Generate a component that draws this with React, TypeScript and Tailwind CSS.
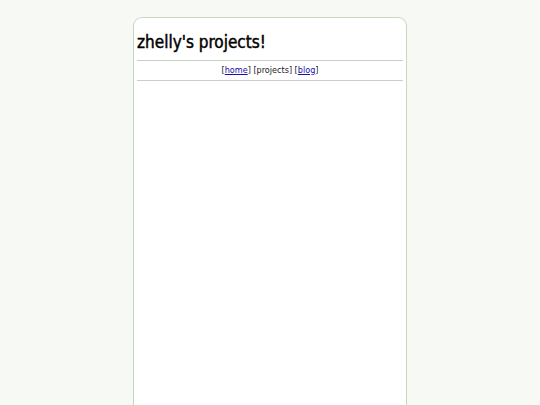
export default function App() {
  return (
    <div className="min-h-[405px] bg-[#f6f9f4] pt-[17px] font-['DejaVu_Sans_Condensed','DejaVu_Sans',Verdana,sans-serif]">
      <div className="mx-auto w-[274px] min-h-[400px] rounded-t-[9px] border border-b-0 border-[#c9d6c1] bg-white px-[3px]">
        <h1 className="mt-[13px] mb-[7px] text-[17px] leading-[22px] font-normal text-black [-webkit-text-stroke:0.45px_#000]">zhelly's projects!</h1>
        <hr className="border-t border-[#c8cfc4]" />
        <nav className="text-center text-[9px] leading-[19px] text-[#222]">
          [<a href="#" className="text-[#1a0dab] underline">home</a>] [projects] [<a href="#" className="text-[#1a0dab] underline">blog</a>]
        </nav>
        <hr className="border-t border-[#c8cfc4]" />
      </div>
    </div>
  );
}
